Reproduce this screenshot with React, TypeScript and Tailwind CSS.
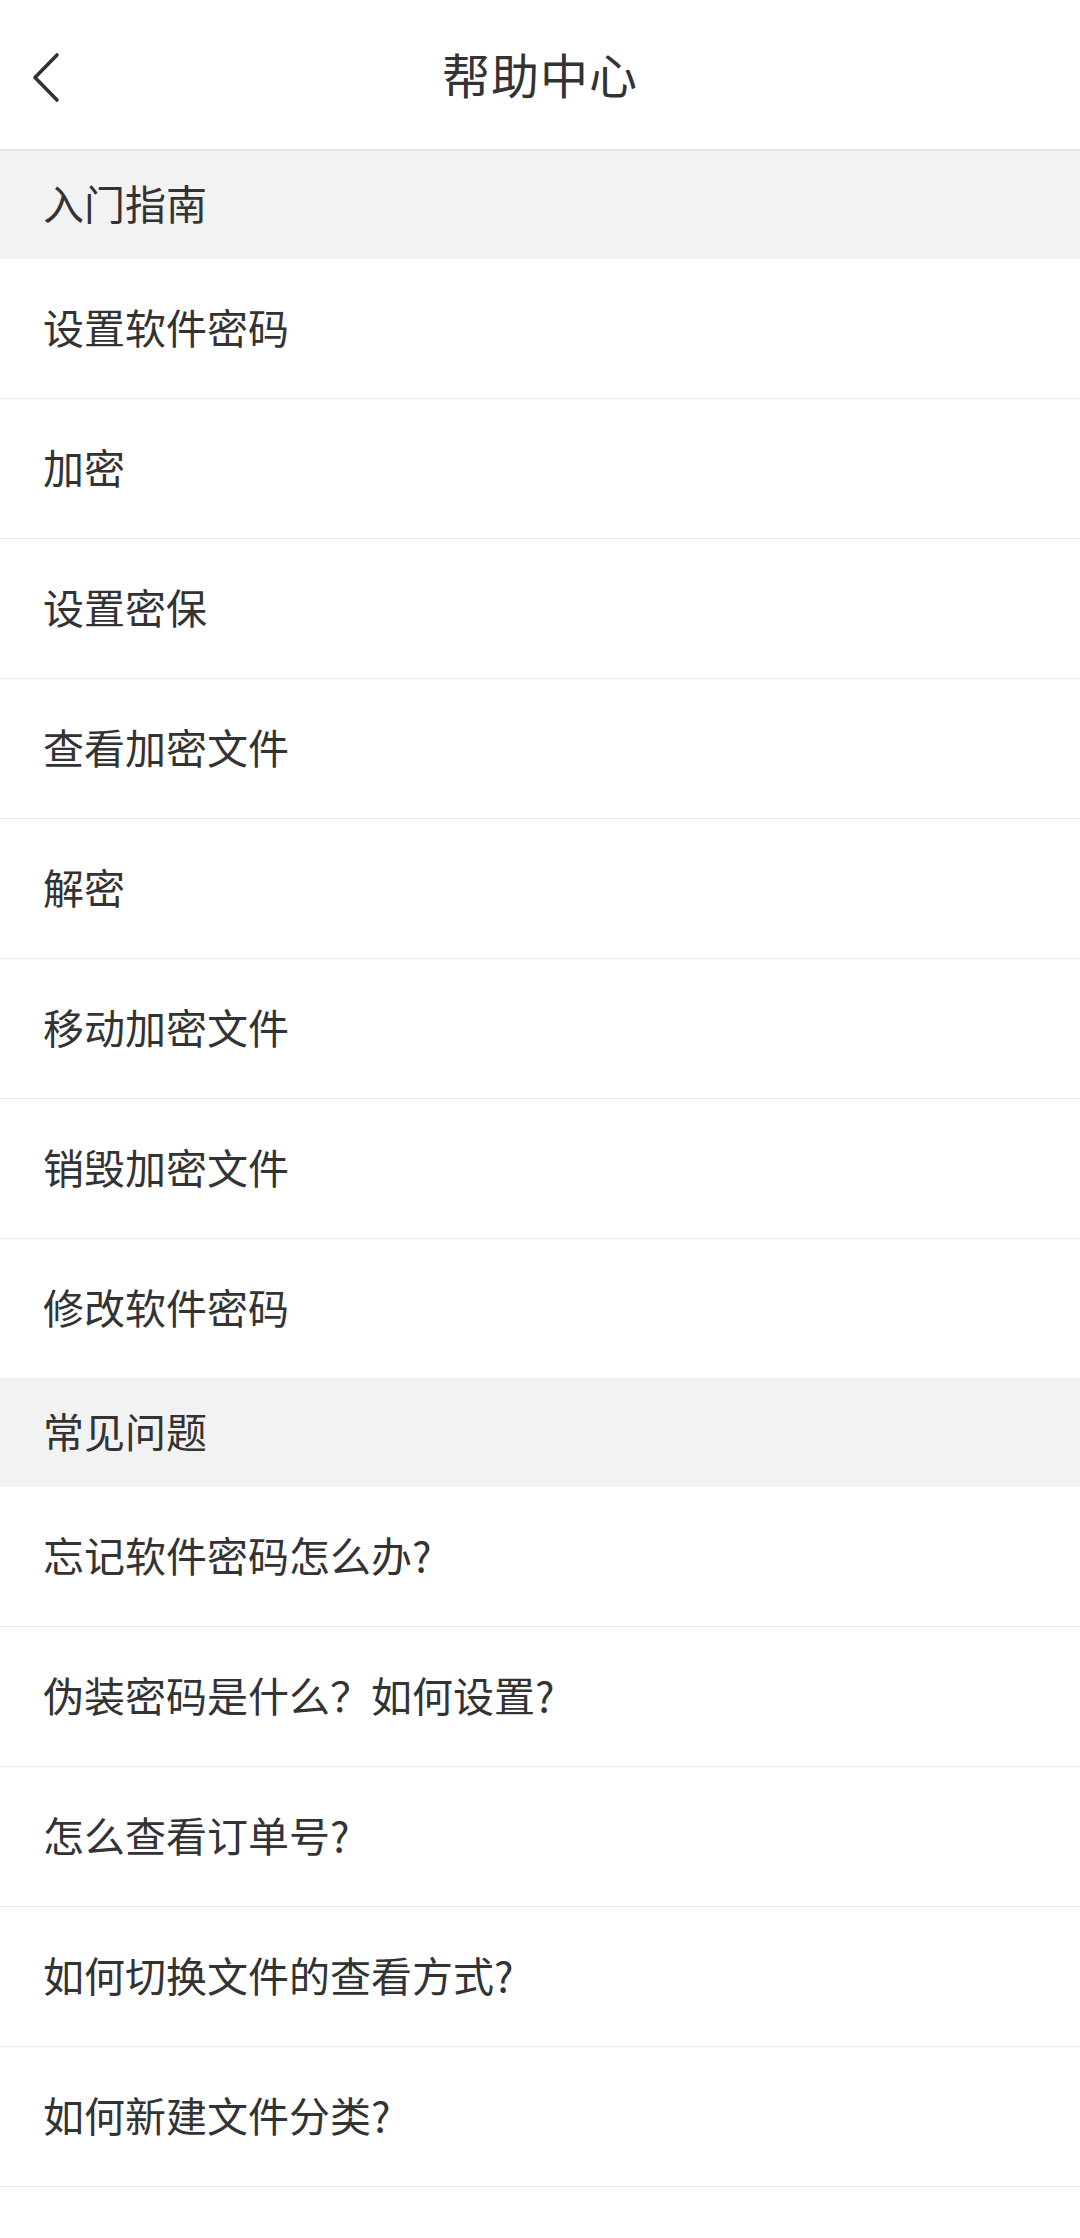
const sections = [
  {
    title: '入门指南',
    items: [
      '设置软件密码',
      '加密',
      '设置密保',
      '查看加密文件',
      '解密',
      '移动加密文件',
      '销毁加密文件',
      '修改软件密码',
    ],
  },
  {
    title: '常见问题',
    items: [
      '忘记软件密码怎么办?',
      '伪装密码是什么？如何设置?',
      '怎么查看订单号?',
      '如何切换文件的查看方式?',
      '如何新建文件分类?',
    ],
  },
];

export default function App() {
  return (
    <div
      className="min-h-screen bg-white text-[#333333]"
      style={{ fontFamily: '"Noto Sans CJK SC", "Noto Sans", sans-serif' }}
    >
      {/* header */}
      <header className="relative h-[151px] flex items-center justify-center border-b-2 border-[#e6e6e6]">
        <button className="absolute left-[30px] top-[52px] w-[32px] h-[52px] flex items-center justify-center">
          <svg width="32" height="52" viewBox="0 0 32 52" fill="none">
            <polyline
              points="27,3 5,25.5 27,48"
              stroke="#333333"
              strokeWidth="3.6"
              strokeLinecap="round"
              strokeLinejoin="round"
            />
          </svg>
        </button>
        <h1 className="text-[48px] leading-none tracking-[1px] pb-[4px]">帮助中心</h1>
      </header>

      {sections.map((section) => (
        <section key={section.title}>
          <div className="h-[108px] bg-[#f2f2f2] flex items-center pl-[43px] pb-[6px] text-[41px] leading-none">
            {section.title}
          </div>
          <ul>
            {section.items.map((item) => (
              <li
                key={item}
                className="h-[140px] flex items-center pl-[43px] pb-[5px] text-[41px] leading-none border-b border-[#ececec]"
              >
                {item}
              </li>
            ))}
          </ul>
        </section>
      ))}
    </div>
  );
}
